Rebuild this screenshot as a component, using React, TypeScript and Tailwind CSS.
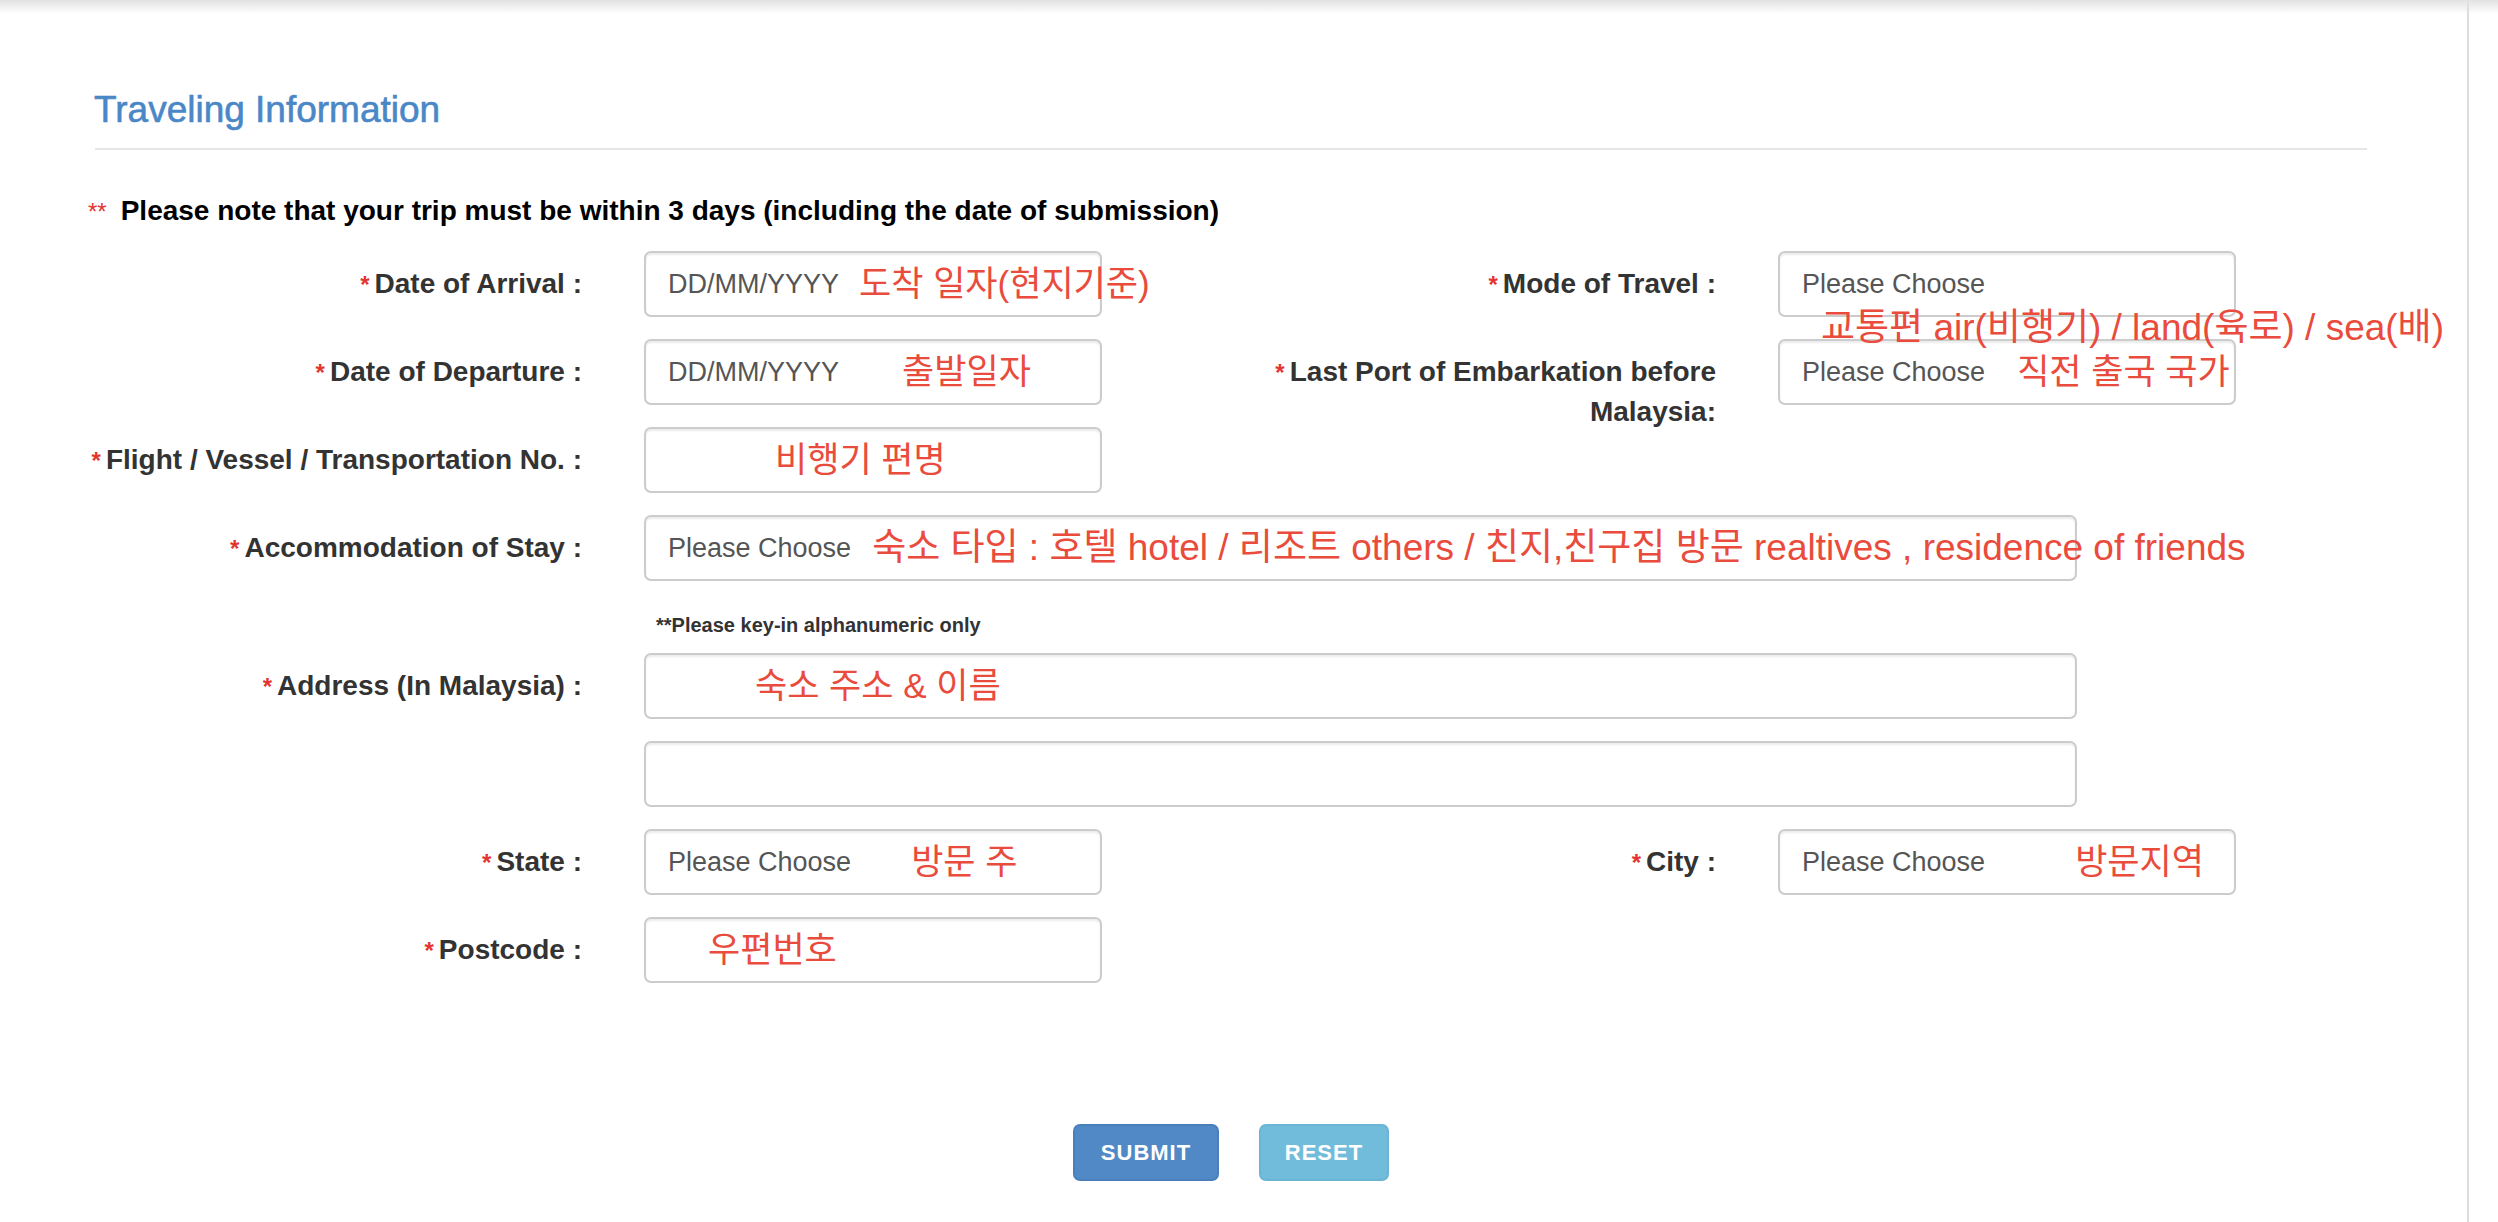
import React from 'react';

type Kids = { children?: React.ReactNode };

// red asterisk + dark bold label, first line centred on the input
const Label = ({ children }: Kids) => (
  <div className="pt-[13px] text-right text-[28px] leading-[39px] font-bold text-[#333333]">
    <span className="mr-[5px] text-[24px] text-[#e3342f]">*</span>
    {children}
  </div>
);

const Box = ({ children, wide = false }: Kids & { wide?: boolean }) => (
  <div
    className={`relative flex h-[66px] items-center whitespace-nowrap rounded-[7px] border-2 border-[#cccccc] bg-white pl-[22px] text-[27px] text-[#555555] shadow-[inset_0_2px_2px_rgba(0,0,0,0.08)] ${
      wide ? 'w-[1433px]' : 'w-[458px]'
    }`}
  >
    {children}
  </div>
);

// red annotation written over the form
const Note = ({ children, className = '' }: Kids & { className?: string }) => (
  <span className={`whitespace-nowrap text-[#e94b3c] ${className}`}>{children}</span>
);

const Row = ({ children }: Kids) => <div className="flex h-[66px]">{children}</div>;

const LeftLabel = ({ children }: Kids) => (
  <div className="w-[582px] shrink-0">
    <Label>{children}</Label>
  </div>
);

const RightLabel = ({ children }: Kids) => (
  <div className="w-[614px] shrink-0">
    <Label>{children}</Label>
  </div>
);

const Cell = ({ children }: Kids) => <div className="ml-[62px] shrink-0">{children}</div>;

export default function App() {
  return (
    <div className="relative h-[1222px] w-full overflow-hidden bg-white font-['Liberation_Sans','Noto_Sans_CJK_KR',sans-serif]">
      <div className="pointer-events-none absolute inset-x-0 top-0 z-20 h-[14px] bg-gradient-to-b from-[#e2e2e2] to-transparent" />

      <div className="h-full w-[2469px] border-r-2 border-[#dcdcdc] pt-[91px]">
        <h3 className="ml-[94px] text-[37px] leading-[37px] text-[#4a87c7] [-webkit-text-stroke:0.6px_#4a87c7]">
          Traveling Information
        </h3>
        <div className="ml-[95px] mt-[20px] h-[2px] w-[2272px] bg-[#e6e6e6]" />

        <p className="ml-[88px] mt-[47px] text-[28px] leading-[27px] font-bold text-black">
          <span className="mr-[14px] text-[24px] font-normal text-[#e3342f]">**</span>
          Please note that your trip must be within 3 days (including the date of submission)
        </p>

        <div className="mt-[26px] flex flex-col gap-[22px]">
          <Row>
            <LeftLabel>Date of Arrival :</LeftLabel>
            <Cell>
              <Box>
                <span>DD/MM/YYYY</span>
                <Note className="ml-[20px] text-[35px]">도착 일자(현지기준)</Note>
              </Box>
            </Cell>
            <RightLabel>Mode of Travel :</RightLabel>
            <Cell>
              <Box>
                <span>Please Choose</span>
                <Note className="absolute left-[41px] top-[55px] z-10 text-[37px] leading-[40px]">
                  교통편 air(비행기) / land(육로) / sea(배)
                </Note>
              </Box>
            </Cell>
          </Row>

          <Row>
            <LeftLabel>Date of Departure :</LeftLabel>
            <Cell>
              <Box>
                <span>DD/MM/YYYY</span>
                <Note className="ml-[63px] text-[35px]">출발일자</Note>
              </Box>
            </Cell>
            <RightLabel>
              Last Port of Embarkation before
              <br />
              Malaysia:
            </RightLabel>
            <Cell>
              <Box>
                <span>Please Choose</span>
                <Note className="ml-[32px] text-[35px]">직전 출국 국가</Note>
              </Box>
            </Cell>
          </Row>

          <Row>
            <LeftLabel>Flight / Vessel / Transportation No. :</LeftLabel>
            <Cell>
              <Box>
                <Note className="ml-[107px] text-[35px]">비행기 편명</Note>
              </Box>
            </Cell>
          </Row>

          <Row>
            <LeftLabel>Accommodation of Stay :</LeftLabel>
            <Cell>
              <Box wide>
                <span>Please Choose</span>
                <Note className="ml-[21px] text-[37px]">
                  숙소 타입 : 호텔 hotel / 리조트 others / 친지,친구집 방문 realtives , residence of friends
                </Note>
              </Box>
            </Cell>
          </Row>
        </div>

        <p className="ml-[656px] mt-[30px] text-[20px] leading-[28px] font-bold text-[#333333]">
          **Please key-in alphanumeric only
        </p>

        <div className="mt-[14px] flex flex-col gap-[22px]">
          <Row>
            <LeftLabel>Address (In Malaysia) :</LeftLabel>
            <Cell>
              <Box wide>
                <Note className="ml-[87px] text-[35px]">숙소 주소 &amp; 이름</Note>
              </Box>
            </Cell>
          </Row>

          <Row>
            <div className="w-[582px] shrink-0" />
            <Cell>
              <Box wide />
            </Cell>
          </Row>

          <Row>
            <LeftLabel>State :</LeftLabel>
            <Cell>
              <Box>
                <span>Please Choose</span>
                <Note className="ml-[60px] text-[35px]">방문 주</Note>
              </Box>
            </Cell>
            <RightLabel>City :</RightLabel>
            <Cell>
              <Box>
                <span>Please Choose</span>
                <Note className="ml-[90px] text-[35px]">방문지역</Note>
              </Box>
            </Cell>
          </Row>

          <Row>
            <LeftLabel>Postcode :</LeftLabel>
            <Cell>
              <Box>
                <Note className="ml-[40px] text-[35px]">우편번호</Note>
              </Box>
            </Cell>
          </Row>
        </div>

        <div className="mt-[141px] flex justify-center gap-[40px] pr-[5px]">
          <button className="h-[57px] w-[146px] rounded-[7px] border-2 border-[#4a7fbb] bg-[#5089c6] text-[22px] font-bold tracking-[1px] text-white">
            SUBMIT
          </button>
          <button className="h-[57px] w-[130px] rounded-[7px] border-2 border-[#6bb5d4] bg-[#72bcdb] text-[22px] font-bold tracking-[1px] text-white">
            RESET
          </button>
        </div>
      </div>
    </div>
  );
}
